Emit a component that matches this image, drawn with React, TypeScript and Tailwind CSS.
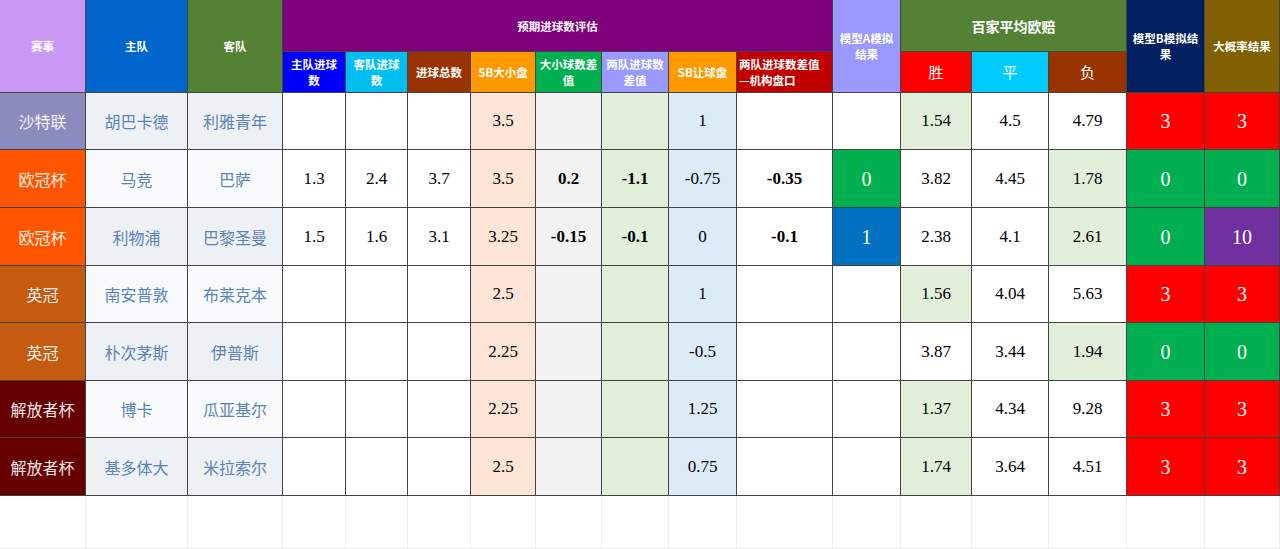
type Row = {
  league: string;
  leagueBg: string;
  home: string;
  away: string;
  teamBg: string;
  evals: string[];
  bold: boolean;
  modelA: string;
  modelABg: string;
  odds: string[];
  hl: number;
  modelB: string;
  modelBBg: string;
  big: string;
  bigBg: string;
};

const RED = "bg-[#ff0000]";
const GREEN = "bg-[#00b050]";

const rows: Row[] = [
  { league: "沙特联", leagueBg: "bg-[#8b8bbd]", home: "胡巴卡德", away: "利雅青年", teamBg: "bg-[#eef1f3]", evals: ["", "", "", "3.5", "", "", "1", ""], bold: false, modelA: "", modelABg: "bg-white", odds: ["1.54", "4.5", "4.79"], hl: 0, modelB: "3", modelBBg: RED, big: "3", bigBg: RED },
  { league: "欧冠杯", leagueBg: "bg-[#ff5500]", home: "马竞", away: "巴萨", teamBg: "bg-[#f8fafc]", evals: ["1.3", "2.4", "3.7", "3.5", "0.2", "-1.1", "-0.75", "-0.35"], bold: true, modelA: "0", modelABg: GREEN, odds: ["3.82", "4.45", "1.78"], hl: 2, modelB: "0", modelBBg: GREEN, big: "0", bigBg: GREEN },
  { league: "欧冠杯", leagueBg: "bg-[#ff5500]", home: "利物浦", away: "巴黎圣曼", teamBg: "bg-[#eef1f3]", evals: ["1.5", "1.6", "3.1", "3.25", "-0.15", "-0.1", "0", "-0.1"], bold: true, modelA: "1", modelABg: "bg-[#0070c0]", odds: ["2.38", "4.1", "2.61"], hl: 2, modelB: "0", modelBBg: GREEN, big: "10", bigBg: "bg-[#7030a0]" },
  { league: "英冠", leagueBg: "bg-[#c55a11]", home: "南安普敦", away: "布莱克本", teamBg: "bg-[#f8fafc]", evals: ["", "", "", "2.5", "", "", "1", ""], bold: false, modelA: "", modelABg: "bg-white", odds: ["1.56", "4.04", "5.63"], hl: 0, modelB: "3", modelBBg: RED, big: "3", bigBg: RED },
  { league: "英冠", leagueBg: "bg-[#c55a11]", home: "朴次茅斯", away: "伊普斯", teamBg: "bg-[#eef1f3]", evals: ["", "", "", "2.25", "", "", "-0.5", ""], bold: false, modelA: "", modelABg: "bg-white", odds: ["3.87", "3.44", "1.94"], hl: 2, modelB: "0", modelBBg: GREEN, big: "0", bigBg: GREEN },
  { league: "解放者杯", leagueBg: "bg-[#660000]", home: "博卡", away: "瓜亚基尔", teamBg: "bg-[#f8fafc]", evals: ["", "", "", "2.25", "", "", "1.25", ""], bold: false, modelA: "", modelABg: "bg-white", odds: ["1.37", "4.34", "9.28"], hl: 0, modelB: "3", modelBBg: RED, big: "3", bigBg: RED },
  { league: "解放者杯", leagueBg: "bg-[#660000]", home: "基多体大", away: "米拉索尔", teamBg: "bg-[#eef1f3]", evals: ["", "", "", "2.5", "", "", "0.75", ""], bold: false, modelA: "", modelABg: "bg-white", odds: ["1.74", "3.64", "4.51"], hl: 0, modelB: "3", modelBBg: RED, big: "3", bigBg: RED },
];

const evalBg = ["bg-white", "bg-white", "bg-white", "bg-[#fce4d6]", "bg-[#f2f2f2]", "bg-[#e2efda]", "bg-[#ddebf7]", "bg-white"];

const cell = "flex items-center justify-center border-r border-b border-[#444444] text-center";
const head = `${cell} font-bold text-white text-[11.5px] leading-[16px]`;
const num = "font-['Liberation_Serif','Noto_Sans_CJK_SC',serif] text-[17px] text-black";
const big = "font-['Liberation_Serif',serif] text-[20px] text-white";
const cjk = "font-['Noto_Sans_CJK_SC',sans-serif]";

export default function App() {
  return (
    <div className={`w-[1280px] h-[549px] overflow-hidden bg-white ${cjk}`}>
      <div className="grid grid-cols-[86px_102px_95px_63px_62px_63px_65px_66px_67px_68px_96px_68px_71px_77px_78px_78px_75px] grid-rows-[52px_41px_57px_58px_58px_57px_58px_57px_58px_53px]">
        {/* header row 1 */}
        <div className={`${head} row-span-2 bg-[#c999f5]`}>赛事</div>
        <div className={`${head} row-span-2 bg-[#0066cc]`}>主队</div>
        <div className={`${head} row-span-2 bg-[#548235]`}>客队</div>
        <div className={`${head} col-span-8 bg-[#800080]`}>预期进球数评估</div>
        <div className={`${head} row-span-2 bg-[#9999ff]`}>模型A模拟<br />结果</div>
        <div className={`${head} col-span-3 bg-[#548235] !text-[14px]`}>百家平均欧赔</div>
        <div className={`${head} row-span-2 bg-[#002060]`}>模型B模拟结<br />果</div>
        <div className={`${head} row-span-2 bg-[#806000]`}>大概率结果</div>

        {/* header row 2 */}
        <div className={`${head} bg-[#0000ff]`}>主队进球<br />数</div>
        <div className={`${head} bg-[#00bff0]`}>客队进球<br />数</div>
        <div className={`${head} bg-[#993300]`}>进球总数</div>
        <div className={`${head} bg-[#ff9900]`}>SB大小盘</div>
        <div className={`${head} bg-[#00b050]`}>大小球数差<br />值</div>
        <div className={`${head} bg-[#9999ff]`}>两队进球数<br />差值</div>
        <div className={`${head} bg-[#ff9900]`}>SB让球盘</div>
        <div className={`${head} bg-[#c00000] !justify-start !text-left pl-[2px]`}>两队进球数差值<br />—机构盘口</div>
        <div className={`${head} bg-[#ff0000] !text-[15px] !font-normal`}>胜</div>
        <div className={`${head} bg-[#00ccff] !text-[15px] !font-normal`}>平</div>
        <div className={`${head} bg-[#993300] !text-[15px] !font-normal`}>负</div>

        {/* data rows */}
        {rows.map((r, i) => (
          <div key={i} className="contents">
            <div className={`${cell} ${r.leagueBg} text-[16px] text-white/90`}>{r.league}</div>
            <div className={`${cell} ${r.teamBg} text-[16px] text-[#5b83ba]`}>{r.home}</div>
            <div className={`${cell} ${r.teamBg} text-[16px] text-[#5b83ba]`}>{r.away}</div>
            {r.evals.map((v, j) => (
              <div
                key={j}
                className={`${cell} ${evalBg[j]} ${num} ${r.bold && (j === 4 || j === 5 || j === 7) ? "font-bold" : ""}`}
              >
                {v}
              </div>
            ))}
            <div className={`${cell} ${r.modelABg} ${big}`}>{r.modelA}</div>
            {r.odds.map((v, j) => (
              <div key={j} className={`${cell} ${j === r.hl ? "bg-[#e2efda]" : "bg-white"} ${num}`}>
                {v}
              </div>
            ))}
            <div className={`${cell} ${r.modelBBg} ${big}`}>{r.modelB}</div>
            <div className={`${cell} ${r.bigBg} ${big}`}>{r.big}</div>
          </div>
        ))}

        {/* empty sheet row */}
        {Array.from({ length: 17 }).map((_, k) => (
          <div key={k} className="border-r border-b border-[#ececec]" />
        ))}
      </div>
    </div>
  );
}
